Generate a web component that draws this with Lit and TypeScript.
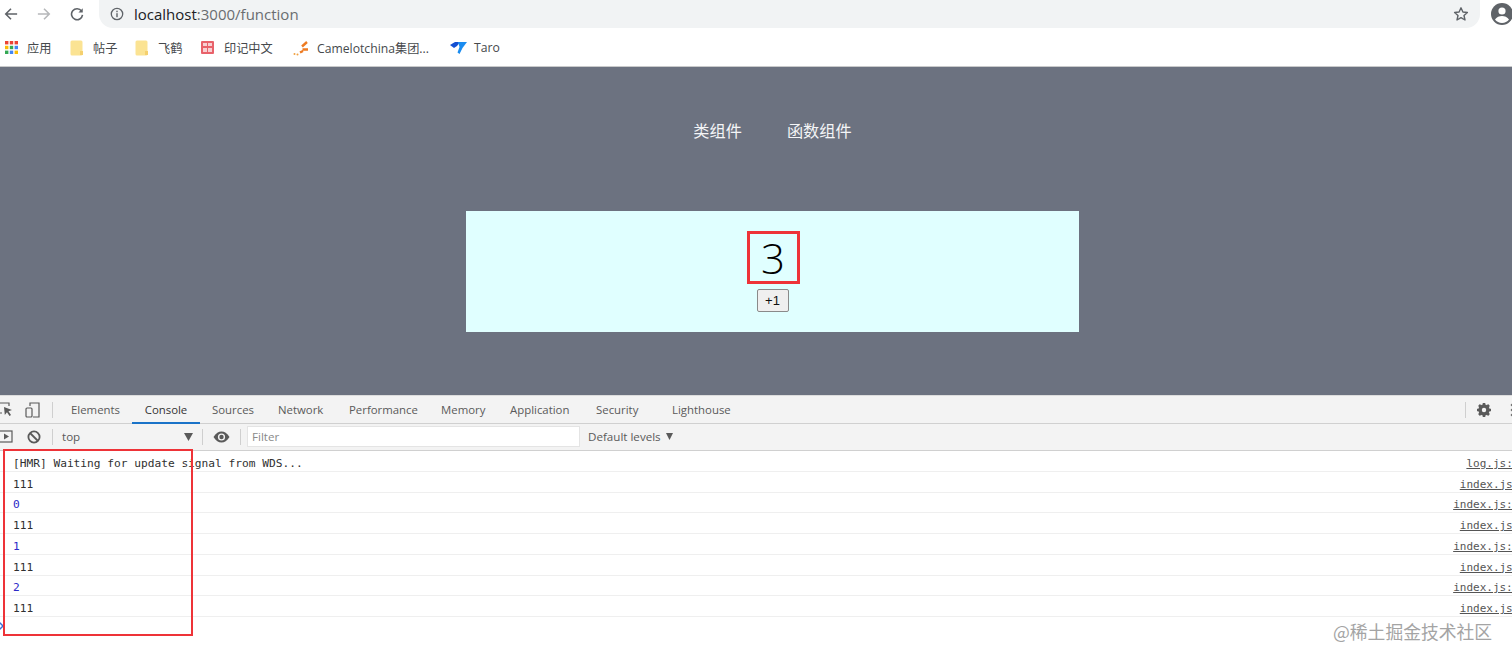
import { LitElement, html, css, svg } from "lit";
import { customElement } from "lit/decorators.js";

const colors = ["#ea4335", "#ea4335", "#ea4335", "#fbbc05", "#34a853", "#4285f4", "#34a853", "#4285f4", "#fbbc05"];

const folder = html`<svg class="ic" width="13" height="16" viewBox="0 0 13 16"><rect x="0.5" y="0.5" width="12" height="15" rx="1.5" fill="#fbe393"/><rect x="10" y="11" width="3" height="4" fill="#f5d06e"/></svg>`;

const logs: [string, string, boolean][] = [
  ["111", "index.js:9", false],
  ["0", "index.js:10", true],
  ["111", "index.js:9", false],
  ["1", "index.js:10", true],
  ["111", "index.js:9", false],
  ["2", "index.js:10", true],
  ["111", "index.js:9", false],
];

@customElement("app-root")
export class AppRoot extends LitElement {
  static styles = css`
    :host { display: block; width: 1512px; height: 662px; overflow: hidden; position: relative; background: #fff;
      font-family: "Noto Sans CJK SC", "Noto Sans", sans-serif; }
    .toolbar { height: 29px; display: flex; align-items: flex-start; background: #fff; }
    .navs { width: 99px; flex: none; display: flex; gap: 19px; padding: 7px 0 0 4px; box-sizing: border-box; }
    .navs svg { display: block; flex: none; }
    .omni { width: 1381px; height: 28px; background: #f1f3f4; border-radius: 0 0 14px 14px; display: flex; align-items: center;
      padding: 0 11px 0 11px; box-sizing: border-box; flex: none; }
    .url { margin-left: 10px; font: 15px "Open Sans", sans-serif; color: #6a6d70; flex: 1; }
    .url b { font-weight: 400; color: #202124; }
    .avatar { margin: 3px 0 0 11px; flex: none; }
    .bookmarks { height: 38px; display: flex; align-items: center; background: #fff; border-bottom: 1px solid #c9cacb; box-sizing: border-box;
      font: 12.2px "Noto Sans CJK SC", sans-serif; color: #46494c; padding: 0 0 0 5px; white-space: nowrap; }
    .bm { display: flex; align-items: center; }
    .ic { flex: none; display: block; }
    .page { height: 328px; background: #6c7280; box-sizing: border-box; padding-top: 52px; display: flex; flex-direction: column; align-items: center; }
    .menu { display: flex; gap: 45px; color: #f4f5f7; font-size: 16.2px; line-height: 22px; height: 22px; margin-left: 33px; }
    .card { margin: 70px 0 0 33px; width: 613px; height: 121px; background: #e0ffff; display: flex; flex-direction: column; align-items: center; padding: 20px 0 0 1px; box-sizing: border-box; }
    .num { width: 53px; height: 53px; box-sizing: border-box; border: 3px solid #ee3338; display: flex; align-items: center; justify-content: center;
      font: 300 42px/1 "Open Sans", sans-serif; color: #000; }
    .btn { margin: 5px 0 0 -1px; width: 32px; height: 23px; box-sizing: border-box; border: 1px solid #8a8a8a; border-radius: 2px; background: #efefef;
      font: 13px "Liberation Sans", sans-serif; color: #111; padding: 0; display: block; }
    .tabs { height: 29px; background: #f3f3f3; border-top: 1px solid #dcdcdc; border-bottom: 1px solid #d0d0d0; box-sizing: border-box; display: flex;
      font: 11.4px "Open Sans", sans-serif; color: #5a5a5a; align-items: stretch; white-space: nowrap; }
    .tools { display: flex; align-items: center; width: 53px; flex: none; }
    .sep { width: 1px; height: 16px; background: #cfcfcf; flex: none; }
    .tab { display: flex; align-items: center; flex: none; box-sizing: border-box; }
    .tab.on { color: #333; border-bottom: 2px solid #1a73c8; margin-bottom: -1px; padding-top: 1px; justify-content: center; }
    .gear { margin-left: auto; margin-right: -2px; display: flex; align-items: center; flex: none; }
    .bar { height: 27px; background: #f3f3f3; border-bottom: 1px solid #d0d0d0; box-sizing: border-box; display: flex; align-items: center; padding-bottom: 1px;
      font: 11.6px "Open Sans", sans-serif; color: #5a5a5a; }
    .ctx { width: 149px; flex: none; padding: 0 9px; box-sizing: border-box; display: flex; justify-content: space-between; align-items: center; }
    .filter { width: 333px; height: 21px; background: #fff; border: 1px solid #e4e4e4; box-sizing: border-box; color: #8a8a8a; padding-left: 4px; line-height: 19px; flex: none; }
    .levels { margin-left: 8px; display: flex; align-items: center; gap: 5px; }
    .rows { background: #fff; }
    .row { height: 20.75px; box-sizing: border-box; border-bottom: 1px solid #efefef; display: flex; justify-content: space-between; align-items: center;
      padding: 6px 0 0 13px; font: 11.2px/14px "DejaVu Sans Mono", monospace; color: #303030; }
    .row.blue .msg { color: #2c2ac8; }
    .src { margin-right: -14px; color: #555; font-size: 11px; text-decoration: underline; }
    .prompt { margin: 3px 0 0 0; height: 12px; display: block; }
    .redbox { position: absolute; left: 3px; top: 449px; width: 190px; height: 187px; box-sizing: border-box; border: 2px solid #ee3338; pointer-events: none; }
    .mark { position: absolute; left: 1333px; top: 619px; font-size: 17.8px; line-height: 24px; color: #a4a4a4; white-space: nowrap; }
  `;

  render() {
    return html`
      <div class="toolbar">
        <div class="navs">
          ${this.arrow(false)}
          ${this.arrow(true)}
          <svg width="14" height="14" viewBox="0 0 16 16"><path d="M13.2 4.6A6.3 6.3 0 1 0 14.3 9" fill="none" stroke="#5f6368" stroke-width="1.8"/><path d="M14.6 1.4v5h-5z" fill="#5f6368"/></svg>
        </div>
        <div class="omni">
          <svg width="14" height="14" viewBox="0 0 14 14"><circle cx="7" cy="7" r="5.7" fill="none" stroke="#5f6368" stroke-width="1.3"/><rect x="6.3" y="6.2" width="1.4" height="4" fill="#5f6368"/><rect x="6.3" y="3.7" width="1.4" height="1.5" fill="#5f6368"/></svg>
          <div class="url"><b>localhost</b>:3000/function</div>
          <svg width="16" height="16" viewBox="0 0 16 16"><path d="M8 1.8l1.9 4.2 4.5.5-3.4 3 1 4.5L8 11.7 4 14l1-4.5-3.4-3 4.5-.5z" fill="none" stroke="#5f6368" stroke-width="1.4" stroke-linejoin="round"/></svg>
        </div>
        <svg class="avatar" width="22" height="22" viewBox="0 0 22 22"><circle cx="11" cy="11" r="11" fill="#5f6368"/><circle cx="11" cy="8" r="3.6" fill="#fff"/><path d="M4 16.5c1.6-2.6 4.4-3.6 7-3.6s5.4 1 7 3.6c-1.6 2.2-4.2 3.5-7 3.5s-5.4-1.3-7-3.5z" fill="#fff"/></svg>
      </div>
      <div class="bookmarks">
        <div class="bm" style="width:65px"><svg class="ic" width="13" height="13" viewBox="0 0 13 13">${colors.map((c, i) => svg`<rect x="${(i % 3) * 4.8}" y="${Math.floor(i / 3) * 4.8}" width="3.4" height="3.4" fill="${c}"/>`)}</svg><span style="margin-left:9px">应用</span></div>
        <div class="bm" style="width:65px">${folder}<span style="margin-left:10px">帖子</span></div>
        <div class="bm" style="width:66px">${folder}<span style="margin-left:10px">飞鹤</span></div>
        <div class="bm" style="width:92px"><svg class="ic" width="13" height="13" viewBox="0 0 13 13"><rect width="13" height="13" rx="1" fill="#e8626a"/><rect x="2" y="2" width="4" height="3" fill="#f8d0d3"/><rect x="7" y="2" width="4" height="3" fill="#f8d0d3"/><rect x="2" y="7" width="4" height="4" fill="#f8d0d3"/><rect x="7" y="7" width="4" height="4" fill="#f8d0d3"/></svg><span style="margin-left:10px">印记中文</span></div>
        <div class="bm" style="width:157px"><svg class="ic" width="16" height="16" viewBox="0 0 16 16"><path d="M9 6.5L14 2M9.5 9.5H15M7 12.5L10 11" stroke="#ee7b22" stroke-width="2.4" fill="none"/><circle cx="1.5" cy="14" r="1" fill="#f0a040"/><circle cx="4.5" cy="14.5" r="1" fill="#f0a040"/></svg><span style="margin-left:8px;font-family:'Open Sans','Noto Sans CJK SC',sans-serif">Camelotchina集团...</span></div>
        <div class="bm"><svg class="ic" width="17" height="13" viewBox="0 0 17 13"><path d="M0 4L5 1h5L7 5 4 7z" fill="#1450d2"/><path d="M8 1h9l-3 4-1.5 2-3 6-2-1.5 2-5.5z" fill="#1a8cf0"/></svg><span style="margin-left:7px;font-family:'Open Sans',sans-serif">Taro</span></div>
      </div>
      <div class="page">
        <div class="menu"><span>类组件</span><span>函数组件</span></div>
        <div class="card">
          <div class="num">3</div>
          <button class="btn">+1</button>
        </div>
      </div>
      <div class="tabs">
        <div class="tools">
          <svg class="ic" style="margin-left:-2px" width="15" height="15" viewBox="0 0 15 15"><path d="M1 1h10v3M1 1v10h3" fill="none" stroke="#5a5a5a" stroke-width="1.2"/><path d="M6 5l8 3-3.5 1.2L13 13l-1.5 1-2.5-3.700L6.800 13z" fill="#5a5a5a"/></svg>
          <svg class="ic" style="margin-left:12px" width="15" height="16" viewBox="0 0 15 16"><path d="M5 4V1h9v14H8" fill="none" stroke="#5a5a5a" stroke-width="1.2"/><rect x="1" y="6" width="6" height="9" rx="1" fill="none" stroke="#5a5a5a" stroke-width="1.2"/></svg>
          <div class="sep" style="margin-left:12px"></div>
        </div>
        <div class="tab" style="width:79px;padding-left:18px">Elements</div>
        <div class="tab on" style="width:68px">Console</div>
        <div class="tab" style="width:67px;padding-left:12px">Sources</div>
        <div class="tab" style="width:70px;padding-left:11px">Network</div>
        <div class="tab" style="width:92px;padding-left:12px">Performance</div>
        <div class="tab" style="width:69px;padding-left:12px">Memory</div>
        <div class="tab" style="width:86px;padding-left:12px">Application</div>
        <div class="tab" style="width:88px;padding-left:12px">Security</div>
        <div class="tab">Lighthouse</div>
        <div class="gear">
          <div class="sep" style="margin-right:10px"></div>
          <svg class="ic" width="16" height="16" viewBox="0 0 16 16"><circle cx="8" cy="8" r="4.2" fill="none" stroke="#5a5a5a" stroke-width="3"/><path d="M8 1v14M1 8h14M3 3l10 10M13 3L3 13" stroke="#5a5a5a" stroke-width="2.6"/><circle cx="8" cy="8" r="2.2" fill="#f3f3f3"/></svg>
          <svg class="ic" style="margin-left:18px" width="4" height="14" viewBox="0 0 4 14"><circle cx="2" cy="2" r="1.3" fill="#777"/><circle cx="2" cy="7" r="1.3" fill="#777"/><circle cx="2" cy="12" r="1.3" fill="#777"/></svg>
        </div>
      </div>
      <div class="bar">
        <svg class="ic" width="13" height="13" viewBox="0 0 13 13"><rect x="-1" y="1" width="13" height="11" fill="none" stroke="#5a5a5a" stroke-width="1.2"/><path d="M4 3.5v6L9 6.500z" fill="#5a5a5a"/></svg>
        <svg class="ic" style="margin-left:14px" width="14" height="14" viewBox="0 0 14 14"><circle cx="7" cy="7" r="5.6" fill="none" stroke="#5a5a5a" stroke-width="1.8"/><path d="M3 3l8 8" stroke="#5a5a5a" stroke-width="1.8"/></svg>
        <div class="sep" style="margin-left:11px"></div>
        <div class="ctx"><span>top</span><svg width="9" height="8" viewBox="0 0 9 8"><path d="M0 0h9L4.500 8z" fill="#5a5a5a"/></svg></div>
        <div class="sep"></div>
        <svg class="ic" style="margin-left:10px" width="17" height="12" viewBox="0 0 17 12"><path d="M0.5 6C3 2 5.500 0.500 8.500 0.500S14 2 16.500 6C14 10 11.500 11.500 8.500 11.500S3 10 0.500 6z" fill="#5a5a5a"/><circle cx="8.500" cy="6" r="3.600" fill="#f3f3f3"/><circle cx="8.500" cy="6" r="2.200" fill="#5a5a5a"/></svg>
        <div class="sep" style="margin:0 6px 0 10px"></div>
        <div class="filter">Filter</div>
        <div class="levels"><span>Default levels</span><svg width="7" height="7" viewBox="0 0 7 7"><path d="M0 0h7L3.500 7z" fill="#5a5a5a"/></svg></div>
      </div>
      <div class="rows">
        <div class="row"><span class="msg">[HMR] Waiting for update signal from WDS...</span><span class="src">log.js:24</span></div>
        ${logs.map(([m, s, b]) => html`<div class="row ${b ? "blue" : ""}"><span class="msg">${m}</span><span class="src">${s}</span></div>`)}
        <svg class="prompt" width="6" height="10" viewBox="0 0 6 10"><path d="M-1 1l4 4-4 4" fill="none" stroke="#3a6fd8" stroke-width="1.5"/></svg>
      </div>
      <div class="redbox"></div>
      <div class="mark">@稀土掘金技术社区</div>
    `;
  }

  arrow(forward: boolean) {
    const c = forward ? "#b6b8ba" : "#5f6368";
    return html`<svg width="14" height="14" viewBox="0 0 16 16" style="${forward ? "transform:scaleX(-1)" : ""}"><path d="M15 8H2M8 2L2 8l6 6" fill="none" stroke="${c}" stroke-width="1.8"/></svg>`;
  }
}
